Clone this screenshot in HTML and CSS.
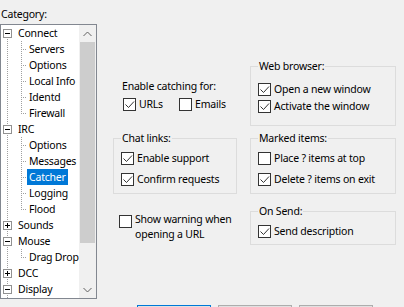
FILE: index.html
```html
<!DOCTYPE html>
<html lang="en">
<head>
    <meta charset="UTF-8">
    <title>Options - Catcher</title>
    <link rel="stylesheet" href="styles.css">
</head>
<body>

<div class="dialog">
    <div class="category">
        <div class="caption">Category:</div>
        <div class="tree">
            <ul class="roots">
                <li>
                    <div class="node"><svg class="box" width="9" height="9"><rect x="0.5" y="0.5" width="8" height="8" fill="#fff" stroke="#919191"/><path d="M2 4.5h5" stroke="#000"/></svg><span class="label">Connect</span></div>
                    <ul class="leaves">
                        <li><span class="label">Servers</span></li>
                        <li><span class="label">Options</span></li>
                        <li><span class="label">Local Info</span></li>
                        <li><span class="label">Identd</span></li>
                        <li><span class="label">Firewall</span></li>
                    </ul>
                </li>
                <li>
                    <div class="node"><svg class="box" width="9" height="9"><rect x="0.5" y="0.5" width="8" height="8" fill="#fff" stroke="#919191"/><path d="M2 4.5h5" stroke="#000"/></svg><span class="label">IRC</span></div>
                    <ul class="leaves">
                        <li><span class="label">Options</span></li>
                        <li><span class="label">Messages</span></li>
                        <li><span class="label selected">Catcher</span></li>
                        <li><span class="label">Logging</span></li>
                        <li><span class="label">Flood</span></li>
                    </ul>
                </li>
                <li>
                    <div class="node"><svg class="box" width="9" height="9"><rect x="0.5" y="0.5" width="8" height="8" fill="#fff" stroke="#919191"/><path d="M2 4.5h5M4.5 2v5" stroke="#000"/></svg><span class="label">Sounds</span></div>
                </li>
                <li>
                    <div class="node"><svg class="box" width="9" height="9"><rect x="0.5" y="0.5" width="8" height="8" fill="#fff" stroke="#919191"/><path d="M2 4.5h5" stroke="#000"/></svg><span class="label">Mouse</span></div>
                    <ul class="leaves">
                        <li><span class="label">Drag Drop</span></li>
                    </ul>
                </li>
                <li>
                    <div class="node"><svg class="box" width="9" height="9"><rect x="0.5" y="0.5" width="8" height="8" fill="#fff" stroke="#919191"/><path d="M2 4.5h5M4.5 2v5" stroke="#000"/></svg><span class="label">DCC</span></div>
                </li>
                <li>
                    <div class="node"><svg class="box" width="9" height="9"><rect x="0.5" y="0.5" width="8" height="8" fill="#fff" stroke="#919191"/><path d="M2 4.5h5" stroke="#000"/></svg><span class="label">Display</span></div>
                </li>
            </ul>
            <div class="scrollbar">
                <div class="arrow"><svg width="9" height="6"><path d="M0.5 5 4.5 1 8.5 5" fill="none" stroke="#606060"/></svg></div>
                <div class="track"><div class="thumb"></div></div>
                <div class="arrow"><svg width="9" height="6"><path d="M0.5 1 4.5 5 8.5 1" fill="none" stroke="#606060"/></svg></div>
            </div>
        </div>
    </div>

    <div class="options">
        <div class="row row-a">
            <div class="catching">
                <div class="text">Enable catching for:</div>
                <div class="inline-checks">
                    <label class="check urls"><span class="cb"><svg width="11" height="11"><path d="M1.5 5.5 4.5 8.5 10 2.5" fill="none" stroke="#333"/></svg></span>URLs</label>
                    <label class="check"><span class="cb"></span>Emails</label>
                </div>
            </div>
            <fieldset class="group wide web">
                <legend>Web browser:</legend>
                <label class="check"><span class="cb"><svg width="11" height="11"><path d="M1.5 5.5 4.5 8.5 10 2.5" fill="none" stroke="#333"/></svg></span>Open a new window</label>
                <label class="check"><span class="cb"><svg width="11" height="11"><path d="M1.5 5.5 4.5 8.5 10 2.5" fill="none" stroke="#333"/></svg></span>Activate the window</label>
            </fieldset>
        </div>

        <div class="row row-b">
            <fieldset class="group narrow pair">
                <legend>Chat links:</legend>
                <label class="check"><span class="cb"><svg width="11" height="11"><path d="M1.5 5.5 4.5 8.5 10 2.5" fill="none" stroke="#333"/></svg></span>Enable support</label>
                <label class="check"><span class="cb"><svg width="11" height="11"><path d="M1.5 5.5 4.5 8.5 10 2.5" fill="none" stroke="#333"/></svg></span>Confirm requests</label>
            </fieldset>
            <fieldset class="group wide pair">
                <legend>Marked items:</legend>
                <label class="check"><span class="cb"></span>Place ? items at top</label>
                <label class="check"><span class="cb"><svg width="11" height="11"><path d="M1.5 5.5 4.5 8.5 10 2.5" fill="none" stroke="#333"/></svg></span>Delete ? items on exit</label>
            </fieldset>
        </div>

        <div class="row row-c">
            <div class="warning">
                <label class="check multi"><span class="cb"></span><span class="multi-text">Show warning when<br>opening a URL</span></label>
            </div>
            <fieldset class="group wide send">
                <legend>On Send:</legend>
                <label class="check"><span class="cb"><svg width="11" height="11"><path d="M1.5 5.5 4.5 8.5 10 2.5" fill="none" stroke="#333"/></svg></span>Send description</label>
            </fieldset>
        </div>
    </div>
</div>

<!-- OK / Cancel / Help, only their top edges show -->
<div class="buttons">
    <button class="default" aria-label="OK"></button>
    <button aria-label="Cancel"></button>
    <button aria-label="Help"></button>
</div>

</body>
</html>
```

FILE: styles.css
```css
html, body {
    height: 100%;
    overflow: hidden;
}
body {
    margin: 0;
    background-color: #f0f0f0;
    font-family: "Noto Sans", "Open Sans", sans-serif;
    font-size: 10.5px;
    letter-spacing: -0.2px;
    color: #000;
}
ul {
    list-style: none;
    margin: 0;
    padding: 0;
}
.dialog {
    display: flex;
    height: 299px;
}

/* category tree */
.category {
    width: 97px;
}
.caption {
    margin-top: 6px;
    padding-left: 1px;
    line-height: 16px;
}
.tree {
    box-sizing: border-box;
    margin-top: 2px;
    height: 275px;
    border: 1px solid #828790;
    background-color: #fff;
    display: flex;
}
.roots {
    flex: 1;
    overflow: hidden;
    background: repeating-linear-gradient(#a0a0a0 0 1px, transparent 1px 2px) no-repeat 6px 8px / 1px 100%;
}
.node {
    display: flex;
    align-items: center;
    height: 16px;
}
.box {
    margin-left: 2px;
    display: block;
}
.node .label {
    margin-left: 4px;
}
.label {
    padding: 0 2px;
    line-height: 16px;
    white-space: nowrap;
}
.label.selected {
    background-color: #0078d7;
    color: #fff;
}
.leaves {
    margin-left: 20px;
}
.leaves li {
    height: 16px;
    padding-left: 6px;
    display: flex;
    background:
        repeating-linear-gradient(to right, #a0a0a0 0 1px, transparent 1px 2px) no-repeat 0 8px / 6px 1px,
        repeating-linear-gradient(#a0a0a0 0 1px, transparent 1px 2px) no-repeat 0 0 / 1px 16px;
}
.leaves li:last-child {
    background:
        repeating-linear-gradient(to right, #a0a0a0 0 1px, transparent 1px 2px) no-repeat 0 8px / 6px 1px,
        repeating-linear-gradient(#a0a0a0 0 1px, transparent 1px 2px) no-repeat 0 0 / 1px 9px;
}
.scrollbar {
    width: 17px;
    background-color: #f0f0f0;
    display: flex;
    flex-direction: column;
}
.arrow {
    height: 17px;
    display: flex;
    align-items: center;
    justify-content: center;
}
.track {
    flex: 1;
}
.thumb {
    margin-left: 1px;
    width: 15px;
    height: 201px;
    background-color: #cdcdcd;
}

/* options panel */
.options {
    padding-left: 16px;
    padding-top: 59px;
}
.row {
    display: flex;
    gap: 13px;
}
.row-b {
    margin-top: 5px;
}
.row-c {
    margin-top: 10px;
}
.catching {
    width: 124px;
    box-sizing: border-box;
    padding-left: 9px;
    padding-top: 19px;
}
.text {
    line-height: 16px;
}
.inline-checks {
    display: flex;
    margin-top: 3px;
    margin-left: 1px;
}
.check {
    display: flex;
    align-items: center;
    height: 14px;
    line-height: 14px;
    white-space: nowrap;
}
.check.urls {
    width: 56px;
}
.cb {
    box-sizing: border-box;
    width: 13px;
    height: 13px;
    border: 1px solid #333;
    background-color: #fff;
    margin-right: 3px;
    flex-shrink: 0;
}
.cb svg {
    display: block;
}
.group {
    box-sizing: border-box;
    margin: 0;
    padding: 0 0 0 7px;
    border: 1px solid #dcdcdc;
    min-width: 0;
}
.group legend {
    padding: 0 1px;
    line-height: 14px;
}
.narrow {
    width: 124px;
}
.wide {
    width: 146px;
}
.web {
    height: 67px;
}
.web .check:first-of-type {
    margin-top: 9px;
}
.web .check + .check {
    margin-top: 3px;
}
.pair {
    height: 63px;
}
.pair .check:first-of-type {
    margin-top: 6px;
}
.pair .check + .check {
    margin-top: 7px;
}
.send {
    height: 41px;
}
.send .check {
    margin-top: 6px;
}
.warning {
    width: 124px;
    box-sizing: border-box;
    padding-left: 6px;
    padding-top: 8px;
}
.check.multi {
    align-items: flex-start;
    height: auto;
    line-height: 15px;
}
.check.multi .cb {
    margin-top: 3px;
    margin-right: 3px;
}
.multi-text {
    white-space: nowrap;
}

/* dialog buttons, mostly below the visible area */
.buttons {
    display: flex;
    gap: 7px;
    margin-top: 6px;
    margin-left: 137px;
}
.buttons button {
    width: 74px;
    height: 23px;
    background-color: #e1e1e1;
    border: 1px solid #adadad;
    padding: 0;
}
.buttons button.default {
    border-color: #0078d7;
}
```
